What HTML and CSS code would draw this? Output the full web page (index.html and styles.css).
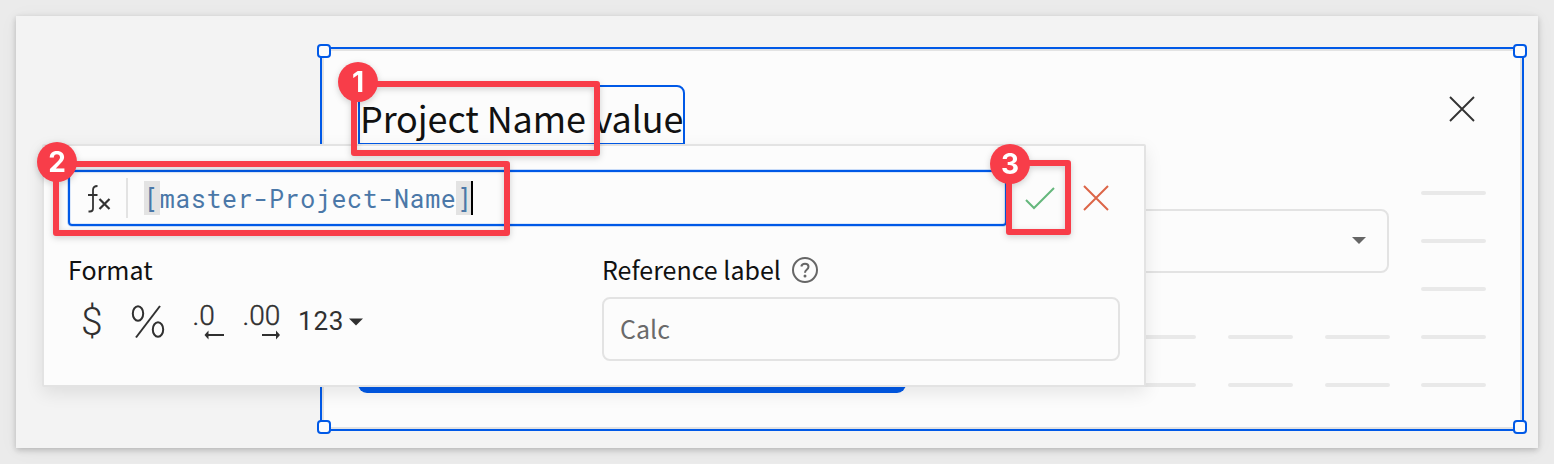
FILE: index.html
```html
<!DOCTYPE html>
<html lang="en">
<head>
<meta charset="utf-8">
<title>Project Name value</title>
<link rel="stylesheet" href="styles.css">
</head>
<body>
<main class="board">
  <section class="modal">
    <header class="modal-header">
      <h1 class="title">Project Name value</h1>
      <svg class="close" viewBox="0 0 26 26"><path d="M1 1 25 25M25 1 1 25"/></svg>
    </header>
    <div class="skeleton">
      <i class="off"></i><i class="off"></i><i class="off"></i><i></i>
      <i class="off"></i><i class="off"></i><i class="off"></i><i></i>
      <i class="off"></i><i class="off"></i><i class="off"></i><i></i>
      <i></i><i></i><i></i><i></i>
      <i></i><i></i><i></i><i></i>
    </div>
    <div class="select"><svg viewBox="0 0 14 7"><path d="M0 0H14L7 7Z"/></svg></div>
    <div class="primary"></div>
    <b class="handle tl"></b><b class="handle tr"></b><b class="handle bl"></b><b class="handle br"></b>
  </section>
</main>

<section class="panel">
  <div class="formula-row">
    <div class="formula">
      <svg class="fx" viewBox="0 0 26 30"><path d="M1.500 27.500H3Q6 27.500 6 24.500V6Q6 2 10.500 2M1 11H10.500"/><path class="times" d="M12.500 15 22.500 25M22.500 15 12.500 25"/></svg>
      <span class="divider"></span>
      <code><mark>[</mark>master-Project-Name<mark>]</mark></code><span class="cursor"></span>
    </div>
    <svg class="accept" viewBox="0 0 30 22"><path d="M1 13 9 21 29 1"/></svg>
    <svg class="cancel" viewBox="0 0 26 26"><path d="M1 1 25 25M25 1 1 25"/></svg>
  </div>
  <div class="options">
    <div class="format">
      <div class="label">Format</div>
      <svg class="tools" viewBox="0 0 310 48">
        <text x="13" y="34" class="dollar">$</text>
        <g class="percent"><ellipse cx="70" cy="12.500" rx="5.200" ry="7.200"/><ellipse cx="90" cy="28.500" rx="5.200" ry="7.200"/><path d="M92 5 68 36.500"/></g>
        <text x="124.500" y="24" class="digits">.0</text>
        <path class="line" d="M138 34H156"/><path d="M136.500 34 140.500 29.500V38.500Z"/>
        <text x="174.500" y="24" class="digits">.00</text>
        <path class="line" d="M194 34H210"/><path d="M212 34 208 29.500V38.500Z"/>
        <text x="230" y="29" class="number">123</text>
        <path d="M281 17.500H295L288 24.500Z"/>
      </svg>
    </div>
    <div class="reference">
      <div class="label">Reference label
        <svg class="help" viewBox="0 0 26 26"><circle cx="13" cy="13" r="12"/><path d="M9.300 9.500Q9.800 6.800 13 6.800Q16.500 6.800 16.500 9.800Q16.500 11.300 14.700 12.700Q13 14 13 15.800"/><circle class="dot" cx="13" cy="19" r="1.500"/></svg>
      </div>
      <div class="field">Calc</div>
    </div>
  </div>
</section>

<div class="callout first"><span>1</span></div>
<div class="callout second"><span>2</span></div>
<div class="callout third"><span>3</span></div>
</body>
</html>
```
FILE: styles.css
```css
* { box-sizing: border-box; }
body {
  margin: 0; padding: 16px; height: 464px; overflow: hidden;
  background: #ebebeb; color: #111;
  font-family: "Noto Sans CJK SC", "Noto Sans", sans-serif;
}
svg { display: block; flex: none; overflow: visible; }
.board {
  display: flex; width: 1522px; height: 432px; padding: 31px 0 0 304px;
  background: #f3f3f3; box-shadow: 0 2px 6px rgba(0,0,0,.22), 0 2px 20px rgba(0,0,0,.04);
}
.modal {
  position: relative; width: 1204px; height: 384px; padding: 34px;
  background: #fcfcfc; border: 2px solid #0059e7; box-shadow: inset 0 0 0 2px #e3e3e3;
  display: flex; flex-direction: column;
}
.modal-header { display: flex; justify-content: space-between; margin: 2px 13px 0 2px; }
.title {
  margin: 0; width: 327px; height: 60px; border: 2px solid #0059e7; border-radius: 0 8px 0 0;
  font-size: 36px; font-weight: 400; line-height: 60px; letter-spacing: -.12px; white-space: nowrap;
}
.close { width: 26px; height: 26px; margin-top: 11px; fill: none; stroke: #333; stroke-width: 1.9; }
.skeleton {
  display: grid; grid-template-columns: repeat(4, 65px); grid-auto-rows: 4px;
  column-gap: 31.7px; row-gap: 44px; margin: 46px 0 0 775.3px;
}
.skeleton i { background: #e9e9e9; border-radius: 2px; }
.skeleton .off { visibility: hidden; }
.select {
  position: absolute; left: 280px; top: 160px; width: 787px; height: 64px;
  border: 2px solid #e3e3e3; border-radius: 8px;
  display: flex; justify-content: flex-end; align-items: center; padding: 0 21px 1px 0;
}
.select svg { width: 14px; height: 7px; fill: #666; }
.primary {
  position: absolute; left: 36px; bottom: 36px; width: 548px; height: 64px;
  background: #0059e7; border-radius: 9px;
}
.handle { position: absolute; width: 14px; height: 14px; background: #fcfcfc; border: 2px solid #0059e7; border-radius: 4px; }
.tl { left: -5px; top: -5px; }
.tr { right: -5px; top: -5px; }
.bl { left: -5px; bottom: -5px; }
.br { right: -5px; bottom: -5px; }

.panel {
  position: absolute; left: 42px; top: 144px; width: 1104px; height: 243px; padding: 24px 24px 0;
  background: #fcfcfc; border: 2px solid #e3e3e3; border-radius: 2px;
  box-shadow: 0 6px 18px rgba(0,0,0,.09);
}
.formula-row { display: flex; align-items: center; height: 56px; }
.formula {
  display: flex; align-items: center; width: 939px; height: 56px; padding-left: 17px;
  border: 2px solid #0059e7; border-radius: 4px; box-shadow: 0 0 0 1px #c8dbf8, inset 0 0 0 1px #dce8fa;
}
.fx { width: 26px; height: 30px; margin-top: 2px; fill: none; stroke: #333; stroke-width: 1.8; }
.fx .times { stroke-width: 2.2; }
.divider { width: 2px; height: 40px; margin: 0 16px 0 13px; background: #e3e3e3; }
code {
  font-family: "Roboto Mono", "DejaVu Sans Mono", monospace; font-size: 25px;
  letter-spacing: .62px; line-height: 36px; margin-top: 2px; color: #4b78a8; white-space: nowrap;
}
mark { display: inline-block; height: 34px; line-height: 36px; background: #e3e3e3; color: inherit; vertical-align: top; }
.cursor { width: 2px; height: 34px; margin-left: -1px; background: #000; }
.accept { width: 30px; height: 22px; margin-left: 18px; fill: none; stroke: #65b77c; stroke-width: 2; }
.cancel { width: 26px; height: 26px; margin-left: 28px; fill: none; stroke: #dc6547; stroke-width: 2; }
.options { display: grid; grid-template-columns: 534px 518px; }
.label { display: flex; align-items: center; height: 40px; margin-top: 24px; padding-bottom: 2px; font-size: 25px; line-height: 38px; }
.tools { width: 310px; height: 48px; margin-top: 11px; fill: #303030; font-family: Roboto, sans-serif; }
.tools .line { fill: none; stroke: #303030; stroke-width: 2; }
.dollar { font-size: 39px; font-weight: 300; }
.percent { fill: none; stroke: #303030; stroke-width: 2; }
.digits { font-size: 28px; font-weight: 300; stroke: #303030; stroke-width: .4px; }
.number { font-size: 26px; letter-spacing: .8px; }
.help { width: 26px; height: 26px; margin: 2px 0 0 11px; fill: none; stroke: #666; stroke-width: 2; }
.help .dot { fill: #666; stroke: none; }
.field {
  height: 64px; margin-top: 7px; padding-left: 16px; border: 2px solid #e3e3e3; border-radius: 8px;
  font-size: 25px; line-height: 58px; color: #6a6a6a;
}

.callout {
  position: absolute; border: 6px solid #f83d49; border-radius: 3px;
  filter: drop-shadow(0 2px 3px rgba(0,0,0,.18));
}
.callout span {
  position: absolute; left: -19px; top: -25px; width: 40px; height: 40px; border-radius: 50%;
  background: #f83d49; color: #fff; text-align: center;
  font: 700 28px/40px Inter, sans-serif;
}
.first { left: 351px; top: 81px; width: 249px; height: 75px; }
.second { left: 53px; top: 161px; width: 457px; height: 75px; }
.third { left: 1006px; top: 160px; width: 65px; height: 75px; }
.second span { left: -22px; top: -25px; }
.third span { left: -22px; top: -22px; }
```
